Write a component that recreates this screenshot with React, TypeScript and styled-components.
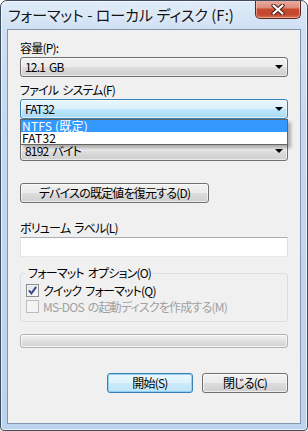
import React from "react";
import styled, { createGlobalStyle } from "styled-components";

const GlobalStyle = createGlobalStyle`
  html, body { margin: 0; padding: 0; background: #ffffff; }
  body {
    font-family: "Noto Sans CJK JP", "Noto Sans", sans-serif;
    font-size: 12px;
    color: #000;
    font-feature-settings: "palt";
  }
  * { box-sizing: border-box; }
`;

const Window = styled.div`
  width: 308px;
  height: 431px;
  border: 1px solid #3e4c5e;
  border-radius: 7px 7px 4px 4px;
  background: linear-gradient(180deg, #e0ecf8 0px, #cfe0f3 28px, #c4d9f0 120px, #bcd3ed 100%);
  box-shadow: inset 0 0 0 1px rgba(255, 255, 255, 0.65);
  display: flex;
  flex-direction: column;
  overflow: hidden;
`;

const TitleBar = styled.div`
  height: 28px;
  flex: none;
  display: flex;
  align-items: flex-start;
  justify-content: space-between;
  padding: 0 6px 0 7px;
`;

const TitleText = styled.div`
  margin-top: 5px;
  font-size: 15px;
  line-height: 18px;
  color: #141414;
  text-shadow: 0 0 6px rgba(255, 255, 255, 0.9);
  white-space: nowrap;
`;

const CloseButton = styled.div`
  width: 46px;
  height: 19px;
  margin-top: -1px;
  border: 1px solid #5c2720;
  border-top: none;
  border-radius: 0 0 5px 5px;
  background: linear-gradient(180deg, #eab0a2 0%, #dc8e7c 42%, #c8492f 52%, #c3472f 80%, #d6704f 100%);
  box-shadow: inset 0 0 0 1px rgba(255, 210, 200, 0.55);
  display: flex;
  align-items: center;
  justify-content: center;
`;

const Client = styled.div`
  flex: 1;
  margin: 0 6px 6px 6px;
  border: 1px solid #8396ad;
  background: #f0f0f0;
  padding: 10px 12px 0 12px;
  display: flex;
  flex-direction: column;
  letter-spacing: -0.8px;
  word-spacing: 2px;
`;

const Label = styled.div<{ $mt?: number; $hidden?: boolean }>`
  margin-top: ${(p) => p.$mt ?? 0}px;
  height: 14px;
  line-height: 14px;
  margin-bottom: 2px;
  white-space: nowrap;
  visibility: ${(p) => (p.$hidden ? "hidden" : "visible")};
`;

const ComboWrap = styled.div`
  position: relative;
`;

const Combo = styled.div<{ $focused?: boolean }>`
  height: 20px;
  border: 1px solid ${(p) => (p.$focused ? "#3c7fb1" : "#707070")};
  border-radius: 3px;
  background: ${(p) =>
    p.$focused
      ? "linear-gradient(180deg, #eaf6fd 0%, #d9f0fc 48%, #bee6fd 52%, #a7d9f5 100%)"
      : "linear-gradient(180deg, #f2f2f2 0%, #ebebeb 48%, #dddddd 52%, #cfcfcf 100%)"};
  box-shadow: inset 0 0 0 1px rgba(255, 255, 255, 0.55);
  display: flex;
  align-items: center;
  justify-content: space-between;
  padding: 0 4px 0 4px;
  line-height: 18px;
  white-space: nowrap;
`;

const Arrow = styled.span`
  width: 0;
  height: 0;
  border-left: 4px solid transparent;
  border-right: 4px solid transparent;
  border-top: 4px solid #000;
`;

const DropList = styled.div`
  position: absolute;
  left: 0;
  right: 0;
  top: 100%;
  z-index: 2;
  background: #ffffff;
  border: 1px solid #646464;
  box-shadow: 3px 3px 3px rgba(0, 0, 0, 0.28);
`;

const DropItem = styled.div<{ $selected?: boolean }>`
  height: 12px;
  line-height: 12px;
  padding-left: 1px;
  letter-spacing: 0.2px;
  word-spacing: 0;
  background: ${(p) => (p.$selected ? "#3399ff" : "transparent")};
  color: ${(p) => (p.$selected ? "#ffffff" : "#000000")};
  white-space: nowrap;
`;

const PushButton = styled.div<{ $width: number; $default?: boolean; $mt?: number }>`
  width: ${(p) => p.$width}px;
  height: 20px;
  margin-top: ${(p) => p.$mt ?? 0}px;
  border: 1px solid ${(p) => (p.$default ? "#3c7fb1" : "#707070")};
  border-radius: 3px;
  background: ${(p) =>
    p.$default
      ? "linear-gradient(180deg, #eaf6fd 0%, #e0f2fc 48%, #cbebfc 52%, #bfe4f8 100%)"
      : "linear-gradient(180deg, #f2f2f2 0%, #ebebeb 48%, #dddddd 52%, #cfcfcf 100%)"};
  box-shadow: inset 0 0 0 1px ${(p) => (p.$default ? "rgba(140, 205, 245, 0.9)" : "rgba(255, 255, 255, 0.6)")};
  display: flex;
  align-items: center;
  justify-content: center;
  line-height: 18px;
  white-space: nowrap;
`;

const TextBox = styled.div`
  height: 20px;
  border: 1px solid;
  border-color: #abadb3 #dbdfe6 #e3e9ef #e2e3ea;
  background: #ffffff;
`;

const Group = styled.fieldset`
  margin: 9px 0 0 0;
  padding: 4px 5px 8px 5px;
  border: 1px solid #d5dfe5;
  border-radius: 3px;
  min-width: 0;
  display: flex;
  flex-direction: column;
  gap: 3px;
`;

const Legend = styled.legend`
  padding: 0 2px;
  margin-left: 0;
  line-height: 14px;
  height: 14px;
`;

const CheckRow = styled.div<{ $disabled?: boolean }>`
  display: flex;
  align-items: center;
  gap: 4px;
  height: 13px;
  line-height: 13px;
  color: ${(p) => (p.$disabled ? "#a0a0a0" : "#000")};
  white-space: nowrap;
`;

const Box = styled.span<{ $disabled?: boolean }>`
  width: 13px;
  height: 13px;
  flex: none;
  border: 1px solid ${(p) => (p.$disabled ? "#bcbcbc" : "#8e8f8f")};
  background: ${(p) =>
    p.$disabled ? "#f4f4f4" : "linear-gradient(135deg, #dcdfe3 0%, #eef0f2 50%, #fbfbfb 100%)"};
  box-shadow: inset 0 0 0 1px #f4f4f4;
  display: flex;
  align-items: center;
  justify-content: center;
`;

const Progress = styled.div`
  margin-top: 12px;
  height: 14px;
  border: 1px solid #b2b2b2;
  border-radius: 3px;
  background: linear-gradient(180deg, #f2f2f2 0%, #e6e6e6 35%, #dadada 70%, #d4d4d4 100%);
  box-shadow: inset 0 0 0 1px rgba(255, 255, 255, 0.7);
`;

const ButtonRow = styled.div`
  margin-top: 25px;
  display: flex;
  justify-content: flex-end;
  gap: 9px;
`;

export default function App() {
  return (
    <>
      <GlobalStyle />
      <Window>
        <TitleBar>
          <TitleText>フォーマット - ローカル ディスク (F:)</TitleText>
          <CloseButton>
            <svg width="14" height="11" viewBox="0 0 14 11">
              <path d="M2.5 1.5 L11.5 9.5 M11.5 1.5 L2.5 9.5" stroke="#4a1d16" strokeWidth="4.2" strokeLinecap="round" />
              <path d="M2.5 1.5 L11.5 9.5 M11.5 1.5 L2.5 9.5" stroke="#ffffff" strokeWidth="2.2" strokeLinecap="round" />
            </svg>
          </CloseButton>
        </TitleBar>
        <Client>
          <Label $mt={1}>容量(P):</Label>
          <Combo>
            <span>12.1 GB</span>
            <Arrow />
          </Combo>
          <Label $mt={6}>ファイル システム(F)</Label>
          <ComboWrap>
            <Combo $focused>
              <span>FAT32</span>
              <Arrow />
            </Combo>
            <DropList>
              <DropItem $selected>NTFS (既定)</DropItem>
              <DropItem>FAT32</DropItem>
            </DropList>
          </ComboWrap>
          <Label $mt={6} $hidden>アロケーション ユニット サイズ(A)</Label>
          <Combo>
            <span>8192 バイト</span>
            <Arrow />
          </Combo>
          <PushButton $width={189} $mt={22}>デバイスの既定値を復元する(D)</PushButton>
          <Label $mt={18}>ボリューム ラベル(L)</Label>
          <TextBox />
          <Group>
            <Legend>フォーマット オプション(O)</Legend>
            <CheckRow>
              <Box>
                <svg width="9" height="9" viewBox="0 0 9 9">
                  <path d="M1 4.4 L3.4 7.4 L8.2 0.8" fill="none" stroke="#3a4c8c" strokeWidth="2" />
                </svg>
              </Box>
              <span>クイック フォーマット(Q)</span>
            </CheckRow>
            <CheckRow $disabled>
              <Box $disabled />
              <span>MS-DOS の起動ディスクを作成する(M)</span>
            </CheckRow>
          </Group>
          <Progress />
          <ButtonRow>
            <PushButton $width={86} $default>開始(S)</PushButton>
            <PushButton $width={86}>閉じる(C)</PushButton>
          </ButtonRow>
        </Client>
      </Window>
    </>
  );
}
